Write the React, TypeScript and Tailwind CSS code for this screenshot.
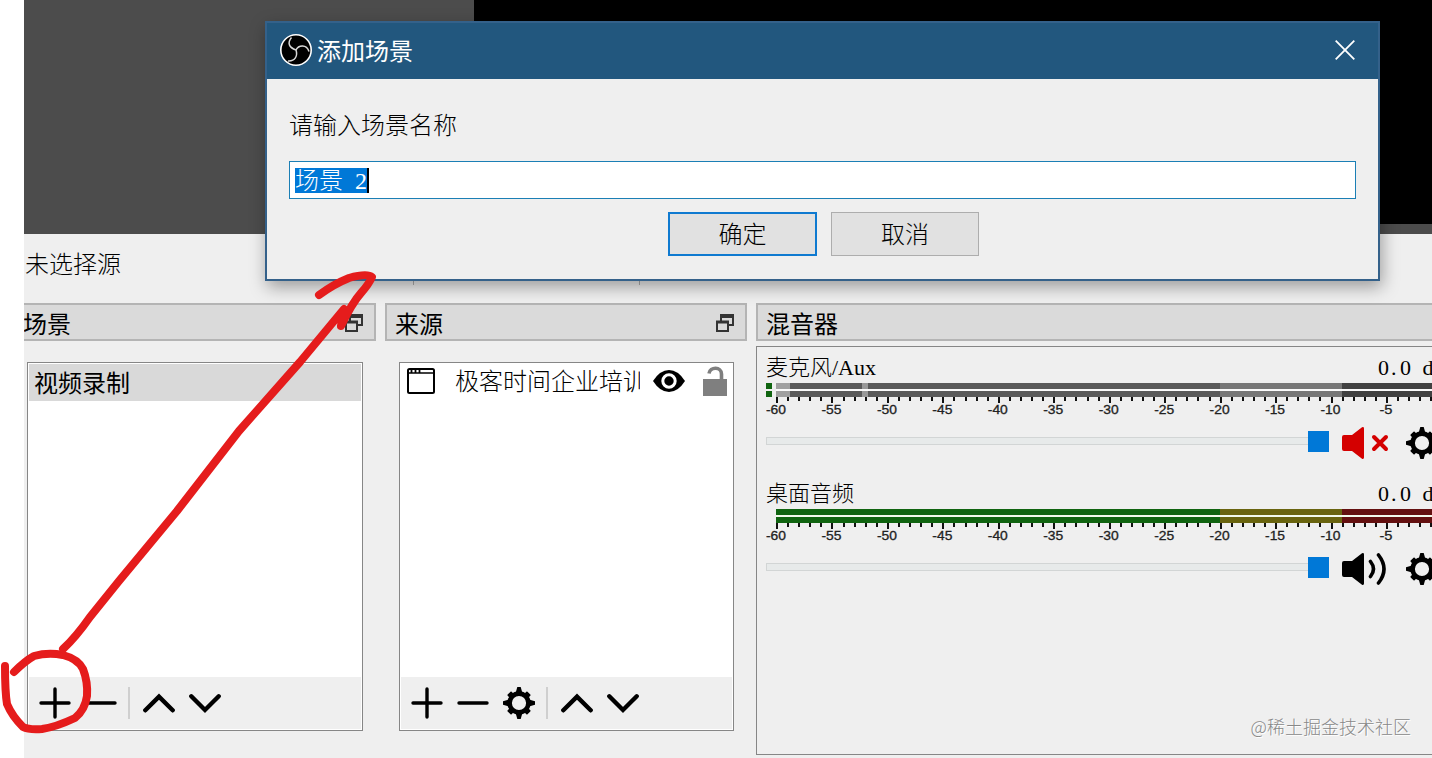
import type { ReactNode } from 'react'

const sans = "font-['Noto_Sans_CJK_SC',sans-serif]"
const song = "font-['Liberation_Serif','Noto_Sans_CJK_SC',serif] font-light"

function Plus() {
  return (
    <svg width="32" height="32" viewBox="0 0 32 32" stroke="#000" strokeWidth="3.4" strokeLinecap="round">
      <path d="M16 2v28M2 16h28" />
    </svg>
  )
}

function Minus() {
  return (
    <svg width="32" height="32" viewBox="0 0 32 32" stroke="#000" strokeWidth="3.4" strokeLinecap="round">
      <path d="M2 16h28" />
    </svg>
  )
}

function Chevron({ down }: { down?: boolean }) {
  return (
    <svg width="32" height="32" viewBox="0 0 32 32" fill="none" stroke="#000" strokeWidth="4.4" strokeLinecap="round" strokeLinejoin="miter">
      <path d={down ? 'M2.3 9.3L16 23L29.7 9.3' : 'M2.3 23.3L16 9.6L29.7 23.3'} />
    </svg>
  )
}

function Gear() {
  return (
    <svg className="shrink-0" width="32" height="32" viewBox="0 0 32 32">
      <circle cx="16" cy="16" r="9.4" fill="none" stroke="#000" strokeWidth="4.6" />
      {[0, 90, 180, 270].map(a => (
        <path key={a} d="M12.6 6L14.3 0H17.7L19.4 6Z" transform={`rotate(${a} 16 16)`} />
      ))}
      {[45, 135, 225, 315].map(a => (
        <path key={a} d="M14 6V2.8H18V6Z" transform={`rotate(${a} 16 16)`} stroke="#000" strokeWidth="1.6" strokeLinejoin="round" />
      ))}
    </svg>
  )
}

function PopOut() {
  return (
    <svg className="mt-0.5" width="18" height="18" viewBox="0 0 18 18" fill="none" stroke="#333" strokeWidth="2">
      <path d="M5 7V1H17V11H12" />
      <path d="M4 2H18" strokeWidth="4" />
      <rect x="1" y="8" width="11" height="9" fill="#dadada" />
      <path d="M0 8H13" strokeWidth="3" />
    </svg>
  )
}

function Speaker({ muted }: { muted?: boolean }) {
  return (
    <svg className="shrink-0" width="48" height="32" viewBox="0 0 48 32" fill="none" strokeLinecap="round">
      <path d="M2 8H10L20 0.3Q22 -0.4 22 1.5V30.5Q22 32.4 20 31.7L10 24H2Q0 24 0 22V10Q0 8 2 8Z" fill={muted ? '#d40000' : '#000'} />
      {muted ? (
        <path d="M32 10L44 22M44 10L32 22" stroke="#d40000" strokeWidth="4" />
      ) : (
        <path d="M28.5 8.5Q34.5 16 28.5 23.5M36.5 2Q47.5 16 36.5 30" stroke="#000" strokeWidth="3.6" />
      )}
    </svg>
  )
}

function DockTitle({ title, first, popOut }: { title: string; first?: boolean; popOut?: boolean }) {
  return (
    <div className={`flex h-[38px] items-center justify-between border-y-2 border-[#b4b4b4] bg-[#dadada] pr-[11px] ${first ? 'border-r-2' : popOut ? 'border-x-2 pl-2' : 'border-l-2 pl-2'}`}>
      <span className={`${sans} text-2xl leading-none ${first ? '-ml-px' : ''} pt-0.5`}>{title}</span>
      {popOut && <PopOut />}
    </div>
  )
}

function ListBox({ children, tools }: { children: ReactNode; tools: ReactNode }) {
  return (
    <div className="mt-[21px] flex h-[369px] flex-col border border-[#868686] bg-white p-px">
      <div className="flex-1">{children}</div>
      <div className="flex h-[52px] items-center gap-[14px] bg-[#efefef] pl-2.5">{tools}</div>
    </div>
  )
}

function Separator() {
  return <div className="-ml-[3px] -mr-px h-8 w-0.5 bg-[#cfcfcf]" />
}

const dbLabels = [-60, -55, -50, -45, -40, -35, -30, -25, -20, -15, -10, -5]

function Meter({ muted }: { muted?: boolean }) {
  const colors = muted ? ['#5a5a5a', '#777777', '#414141'] : ['#106410', '#69640f', '#641010']
  return (
    <svg className="block" width="668" height="36" viewBox="0 0 668 36">
      <rect x="10" y="6" width="658" height="2" fill={muted ? '#fafafa' : '#f2faec'} />
      {[0, 8].map(y => (
        <g key={y}>
          <rect x="10" y={y} width="444" height="6" fill={colors[0]} />
          <rect x="454" y={y} width="122" height="6" fill={colors[1]} />
          <rect x="576" y={y} width="92" height="6" fill={colors[2]} />
          {muted && <rect x="0" y={y} width="6" height="6" fill="#106410" />}
          {muted && <rect x="10" y={y} width="14" height="6" fill="#a0a0a0" />}
          {muted && <rect x="96" y={y} width="6" height="6" fill="#999" />}
        </g>
      ))}
      {Array.from({ length: 60 }, (_, i) => (
        <rect key={i} x={Math.round(10 + i * 11.09)} y="14" width={2} height={i % 5 === 0 ? 6 : 4} fill="#111" />
      ))}
      {dbLabels.map((db, i) => (
        <text key={db} x={10 + i * 55.45} y="31" textAnchor="middle" textLength={db === -5 ? 13 : 20} lengthAdjust="spacingAndGlyphs" className="font-['Liberation_Sans',sans-serif] text-[12.5px]" fill="#222" stroke="#222" strokeWidth="0.3">
          {db}
        </text>
      ))}
    </svg>
  )
}

function Channel({ name, muted }: { name: string; muted?: boolean }) {
  return (
    <div className="h-[126px] pl-[9px]">
      <div className={`${song} flex h-[30px] items-center justify-between text-[22px] leading-none whitespace-nowrap`}>
        <span>{name}</span>
        <span className="w-[55px] overflow-hidden pl-px [word-spacing:6px]">0<span className="ml-0.5 mr-[3.5px]">.</span>0 dB</span>
      </div>
      <Meter muted={muted} />
      <div className="flex h-[46px] items-center">
        <div className="-mt-0.5 h-2 w-[542px] shrink-0 border border-r-0 border-[#d2d5d5] bg-[#e7eaea]" />
        <div className="-mt-0.5 h-[21px] w-[21px] shrink-0 bg-[#0078d7]" />
        <div className="ml-[13px] flex shrink-0 gap-4 pt-0.5">
          <Speaker muted={muted} />
          <Gear />
        </div>
      </div>
    </div>
  )
}

function ObsLogo() {
  return (
    <svg className="-mt-0.5" width="32" height="32" viewBox="0 0 32 32" fill="none" stroke="#d8d8d8">
      <circle cx="16" cy="16" r="15.2" fill="#000" strokeWidth="1.6" stroke="#fff" />
      <path d="M11.5 3.5C7 9 9 13.5 16 16" strokeWidth="1.5" />
      <path d="M16 16C18.5 11 26.5 10 29 17.5" strokeWidth="1.5" />
      <path d="M16 16C18 22 15 27.5 8 27" strokeWidth="1.5" />
    </svg>
  )
}

function AddSceneDialog() {
  return (
    <div className="absolute left-[265px] top-[21px] flex h-[260px] w-[1115px] flex-col border-2 border-[#34618a] bg-[#efefef] shadow-[2px_6px_16px_rgba(0,0,0,0.35)]">
      <div className="flex h-14 items-center bg-[#22577e] pl-[13px] pr-[23px] text-white">
        <ObsLogo />
        <span className={`${sans} -mt-0.5 ml-[5px] flex-1 text-2xl leading-none`}>添加场景</span>
        <svg className="-mt-0.5" width="20" height="20" viewBox="0 0 20 20" stroke="#fff" strokeWidth="1.8">
          <path d="M0.7 0.7L19.3 19.3M19.3 0.7L0.7 19.3" />
        </svg>
      </div>
      <div className={`${song} px-[22px] text-2xl`}>
        <div className="mt-8 h-[30px] leading-[30px]">请输入场景名称</div>
        <div className="mt-5 flex h-[38px] items-center border border-[#1b7fb5] bg-white pl-[5px] pt-px">
          <span className="h-[25px] w-[72px] whitespace-nowrap bg-[#0078d7] leading-[27px] text-white [word-spacing:6px]">场景 2</span>
          <span className="h-[25px] w-0.5 bg-black" />
        </div>
        <div className="mt-[13px] flex justify-center gap-[14px] pl-[2px]">
          <button className="h-11 w-[149px] border-2 border-[#0f7ad0] bg-[#e1e1e1] pt-px">确定</button>
          <button className="h-11 w-[148px] border border-[#adadad] bg-[#e1e1e1] pt-px">取消</button>
        </div>
      </div>
    </div>
  )
}

function Annotation() {
  return (
    <svg className="pointer-events-none absolute left-0 top-0" width="1432" height="758" fill="none" stroke="#e51c1c" strokeWidth="8" strokeLinecap="round" strokeLinejoin="round">
      <path d="M14 672Q25 661 34 656Q48 652 63 655Q78 659 83 669Q88 682 87 696Q85 710 75 718Q56 727 42 729Q29 730 23 727Q12 716 7 704Q5 692 5 666" />
      <path d="M63 649Q76 637 90 617L119 581L177 511L239 431L300 362Q325 332 344 309L341 326Q352 303 361 293Q369 284 372 277Q367 273 349 278Q334 284 319 295" />
    </svg>
  )
}

export default function App() {
  return (
    <div className="relative h-[758px] w-[1432px] overflow-hidden bg-white pl-6 text-black">
      <div className="flex h-full flex-col overflow-hidden bg-[#efefef]">
        <div className="h-[234px] shrink-0 bg-[#4c4c4c] pl-[450px]">
          <div className="h-56 bg-black" />
        </div>
        <div className="flex h-[69px] shrink-0 items-start">
          <span className={`${song} w-[389px] pl-px pt-[17px] text-2xl leading-7`}>未选择源</span>
          <div className="h-[51px] w-[227px] border-x border-[#adadad]" />
        </div>
        <div className="flex flex-1 gap-[9px]">
          <section className="w-[352px] shrink-0">
            <DockTitle title="场景" first popOut />
            <div className="pl-[3px] pr-[13px]">
              <ListBox tools={<><Plus /><Minus /><Separator /><Chevron /><Chevron down /></>}>
                <div className={`${sans} h-[37px] bg-[#d9d9d9] pl-[5px] text-2xl leading-[35px]`}>视频录制</div>
              </ListBox>
            </div>
          </section>
          <section className="w-[362px] shrink-0">
            <DockTitle title="来源" popOut />
            <div className="pl-[14px] pr-[13px]">
              <ListBox tools={<><Plus /><Minus /><Gear /><Separator /><Chevron /><Chevron down /></>}>
                <div className="flex h-[34px] items-center pl-[6px]">
                  <svg width="28" height="26" viewBox="0 0 28 26" fill="none" stroke="#000" strokeWidth="2">
                    <rect x="1" y="1" width="26" height="24" rx="1.5" />
                    <path d="M1 5H27" strokeWidth="1.5" />
                    <path d="M4.5 1V5M8.5 1V5M12.5 1V5" strokeWidth="1.8" />
                  </svg>
                  <span className={`${song} ml-[20px] w-[185px] overflow-hidden whitespace-nowrap pt-0.5 text-2xl leading-8`}>极客时间企业培训</span>
                  <svg className="ml-[13px]" width="32" height="22" viewBox="0 0 32 22">
                    <path d="M0 11Q7 0 16 0T32 11Q25 22 16 22T0 11Z" />
                    <circle cx="16" cy="11" r="6.2" fill="none" stroke="#fff" strokeWidth="3" />
                  </svg>
                  <svg className="ml-[18px]" width="24" height="30" viewBox="0 0 24 30" fill="#7f7f7f">
                    <rect y="13" width="24" height="17" />
                    <path d="M6 7.5C7 0.5 18.5 0.5 18.5 8V14" fill="none" stroke="#7f7f7f" strokeWidth="3.6" />
                  </svg>
                </div>
              </ListBox>
            </div>
          </section>
          <section className="min-w-0 flex-1">
            <DockTitle title="混音器" />
            <div className="mt-[5px] h-[409px] overflow-hidden border border-r-0 border-[#868686] pt-1.5">
              <Channel name="麦克风/Aux" muted />
              <Channel name="桌面音频" />
            </div>
          </section>
        </div>
      </div>
      <AddSceneDialog />
      <Annotation />
      <div className={`${sans} absolute bottom-[19px] right-[21px] text-[18px] font-light leading-[26px] text-[#888] [text-shadow:1px_1px_0_#fff]`}>@稀土掘金技术社区</div>
    </div>
  )
}
